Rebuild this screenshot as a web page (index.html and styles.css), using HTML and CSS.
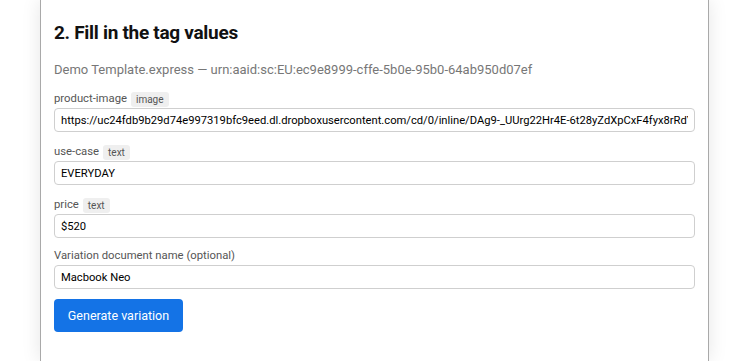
FILE: index.html
```html
<!DOCTYPE html>
<html>
<head>
<meta charset="utf-8">
<link rel="stylesheet" href="styles.css">
</head>
<body>
<div class="page">
  <div class="card">
    <h2 class="title">2. Fill in the tag values</h2>
    <p class="subtitle">Demo Template.express — urn:aaid:sc:EU:ec9e8999-cffe-5b0e-95b0-64ab950d07ef</p>
    <div class="fields">
      <div class="field">
        <div class="label">product-image <span class="badge">image</span></div>
        <input class="input" type="text" value="https://uc24fdb9b29d74e997319bfc9eed.dl.dropboxusercontent.com/cd/0/inline/DAg9-_UUrg22Hr4E-6t28yZdXpCxF4fyx8rRdY2OOxQ">
      </div>
      <div class="field">
        <div class="label">use-case <span class="badge">text</span></div>
        <input class="input" type="text" value="EVERYDAY">
      </div>
      <div class="field">
        <div class="label">price <span class="badge">text</span></div>
        <input class="input" type="text" value="$520">
      </div>
      <div class="field field-last">
        <div class="label">Variation document name (optional)</div>
        <input class="input" type="text" value="Macbook Neo">
      </div>
    </div>
    <button class="btn">Generate variation</button>
  </div>
</div>
</body>
</html>
```

FILE: styles.css
```css
html, body {
  margin: 0;
  padding: 0;
  background: #ffffff;
  height: 100%;
  overflow: hidden;
}
.page {
  padding-left: 40px;
  height: 100%;
  font-family: Roboto, "Liberation Sans", sans-serif;
}
.card {
  width: 669px;
  height: 100%;
  box-sizing: border-box;
  background: #fff;
  border-left: 1px solid #a9a9a9;
  border-right: 1px solid #a9a9a9;
  box-shadow: 0 0 18px rgba(0,0,0,0.10);
  padding: 21px 13px 0 13px;
}
.title {
  margin: 0;
  font-size: 19px;
  font-weight: 700;
  letter-spacing: -0.3px;
  color: #111;
  line-height: 24px;
}
.subtitle {
  margin: 17px 0 0 0;
  font-size: 13px;
  color: #777;
  line-height: 16px;
}
.fields {
  margin-top: 13px;
}
.field + .field {
  margin-top: 12px;
}
.field-last {
  margin-top: 10px !important;
}
.label {
  display: flex;
  align-items: center;
  gap: 4px;
  font-size: 11.3px;
  color: #555;
  height: 16px;
  line-height: 16px;
  margin-bottom: 1px;
}
.badge {
  background: #efefef;
  color: #555;
  font-size: 10px;
  border-radius: 3px;
  padding: 1px 5px;
  line-height: 13px;
}
.input {
  display: block;
  box-sizing: border-box;
  width: 100%;
  height: 24px;
  border: 1px solid #cfcfcf;
  border-radius: 4px;
  padding: 0 6px;
  font-family: Roboto, "Liberation Sans", sans-serif;
  font-size: 11.2px;
  color: #000;
  background: #fff;
  outline: none;
}
.btn {
  margin-top: 10px;
  display: block;
  width: 129px;
  height: 33px;
  background: #1473e6;
  color: #fff;
  border: none;
  border-radius: 4px;
  font-family: Roboto, "Liberation Sans", sans-serif;
  font-size: 12.5px;
  font-weight: 400;
}
```
